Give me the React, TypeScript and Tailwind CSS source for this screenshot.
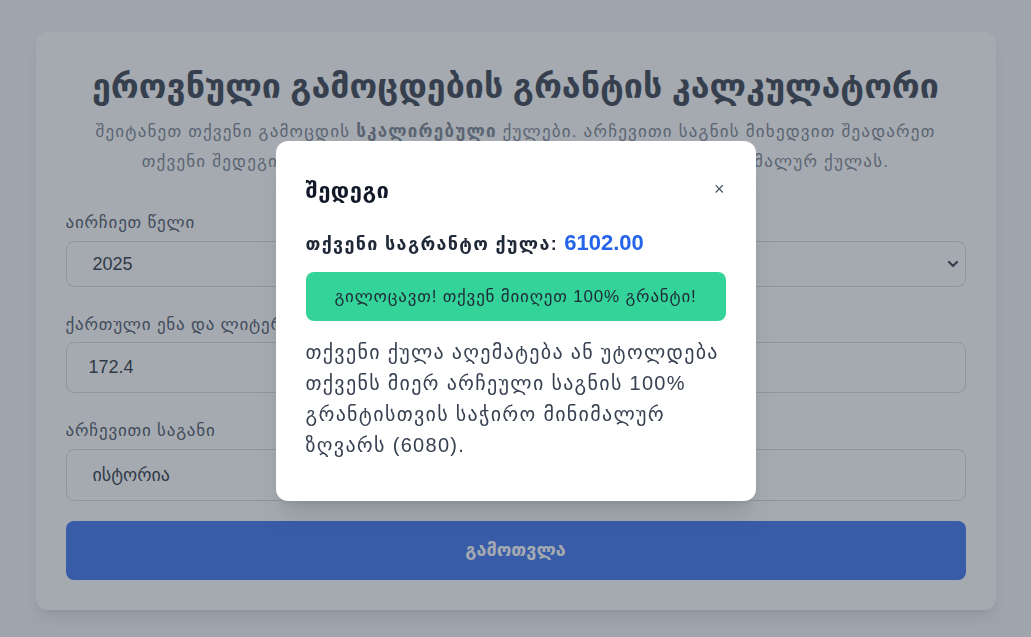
import React from "react";

const FONT = { fontFamily: '"Liberation Sans", "DejaVu Sans", "Noto Sans", sans-serif' };

export default function App() {
  return (
    <div className="min-h-screen bg-[#f3f4f6] flex justify-center py-8" style={FONT}>
      <div className="w-[960px] bg-white rounded-xl shadow-lg p-[30px]">
        <h1 className="text-center text-[34px] leading-[48px] font-bold text-[#1f2937]">
          ეროვნული გამოცდების გრანტის კალკულატორი
        </h1>
        <p className="mt-[7px] text-center text-[17px] leading-[30px] tracking-[1.2px] text-[#6b7280]">
          შეიტანეთ თქვენი გამოცდის <span className="font-bold">სკალირებული</span> ქულები. არჩევითი საგნის მიხედვით შეადარეთ
          <br />
          თქვენი შედეგი 100%-იანი სახელმწიფო გრანტისთვის საჭირო მინიმალურ ქულას.
        </p>

        <div className="mt-[34px]">
          <label className="block text-[17px] leading-[24px] tracking-[0.8px] text-[#374151] mb-[6px]">აირჩიეთ წელი</label>
          <div className="relative">
            <select className="w-full h-[46px] appearance-none rounded-lg border border-[#d1d5db] bg-white pl-[26px] pr-10 text-[18px] text-[#111827] outline-none" defaultValue="2025">
              <option>2025</option>
            </select>
            <svg className="absolute right-[7px] top-[18px] w-[12px] h-[10px] pointer-events-none" viewBox="0 0 12 10" fill="none">
              <path d="M2 3l4 4 4-4" stroke="#1f2937" strokeWidth="2.2" strokeLinecap="round" strokeLinejoin="round" />
            </svg>
          </div>
        </div>

        <div className="mt-[26px]">
          <label className="block text-[17px] leading-[24px] tracking-[0.8px] text-[#374151] mb-[5px]">ქართული ენა და ლიტერატურა</label>
          <input className="w-full h-[51px] rounded-lg border border-[#d1d5db] bg-white px-[22px] text-[18px] text-[#111827] outline-none" defaultValue="172.4" />
        </div>

        <div className="mt-[26px]">
          <label className="block text-[17px] leading-[24px] tracking-[0.8px] text-[#374151] mb-[6px]">არჩევითი საგანი</label>
          <div className="w-full h-[52px] rounded-lg border border-[#d1d5db] bg-white pl-[26px] flex items-center text-[18px] text-[#111827]">
            ისტორია
          </div>
        </div>

        <button className="mt-[20px] w-full h-[59px] rounded-lg bg-[#2563eb] text-white text-[18px] font-bold">
          გამოთვლა
        </button>
      </div>

      <div className="fixed inset-0 bg-[#4b5563]/50 flex items-center justify-center">
        <div className="w-[480px] bg-white rounded-xl shadow-xl px-[30px] pt-[30px] pb-[40px] mt-[5px]">
          <div className="flex items-center justify-between">
            <h2 className="text-[22px] leading-[40px] font-bold tracking-[0.5px] text-[#111827]">შედეგი</h2>
            <span className="text-[#4b5563] text-[18px] leading-none mr-[1px] -mt-[4px]">×</span>
          </div>
          <p className="mt-[17px] text-[18px] leading-[30px] font-bold tracking-[1.3px] text-[#1f2937]">
            თქვენი საგრანტო ქულა: <span className="text-[#2563eb] text-[22px] tracking-normal">6102.00</span>
          </p>
          <div className="mt-[13px] rounded-lg bg-[#34d399] py-3 text-center text-[17px] leading-[25px] tracking-[0.8px] text-[#1f2937]">
            გილოცავთ! თქვენ მიიღეთ 100% გრანტი!
          </div>
          <p className="mt-[16px] text-[20px] leading-[31px] tracking-[1.3px] text-[#374151]">
            თქვენი ქულა აღემატება ან უტოლდება
            <br />
            თქვენს მიერ არჩეული საგნის 100%
            <br />
            გრანტისთვის საჭირო მინიმალურ
            <br />
            ზღვარს (6080).
          </p>
        </div>
      </div>
    </div>
  );
}
